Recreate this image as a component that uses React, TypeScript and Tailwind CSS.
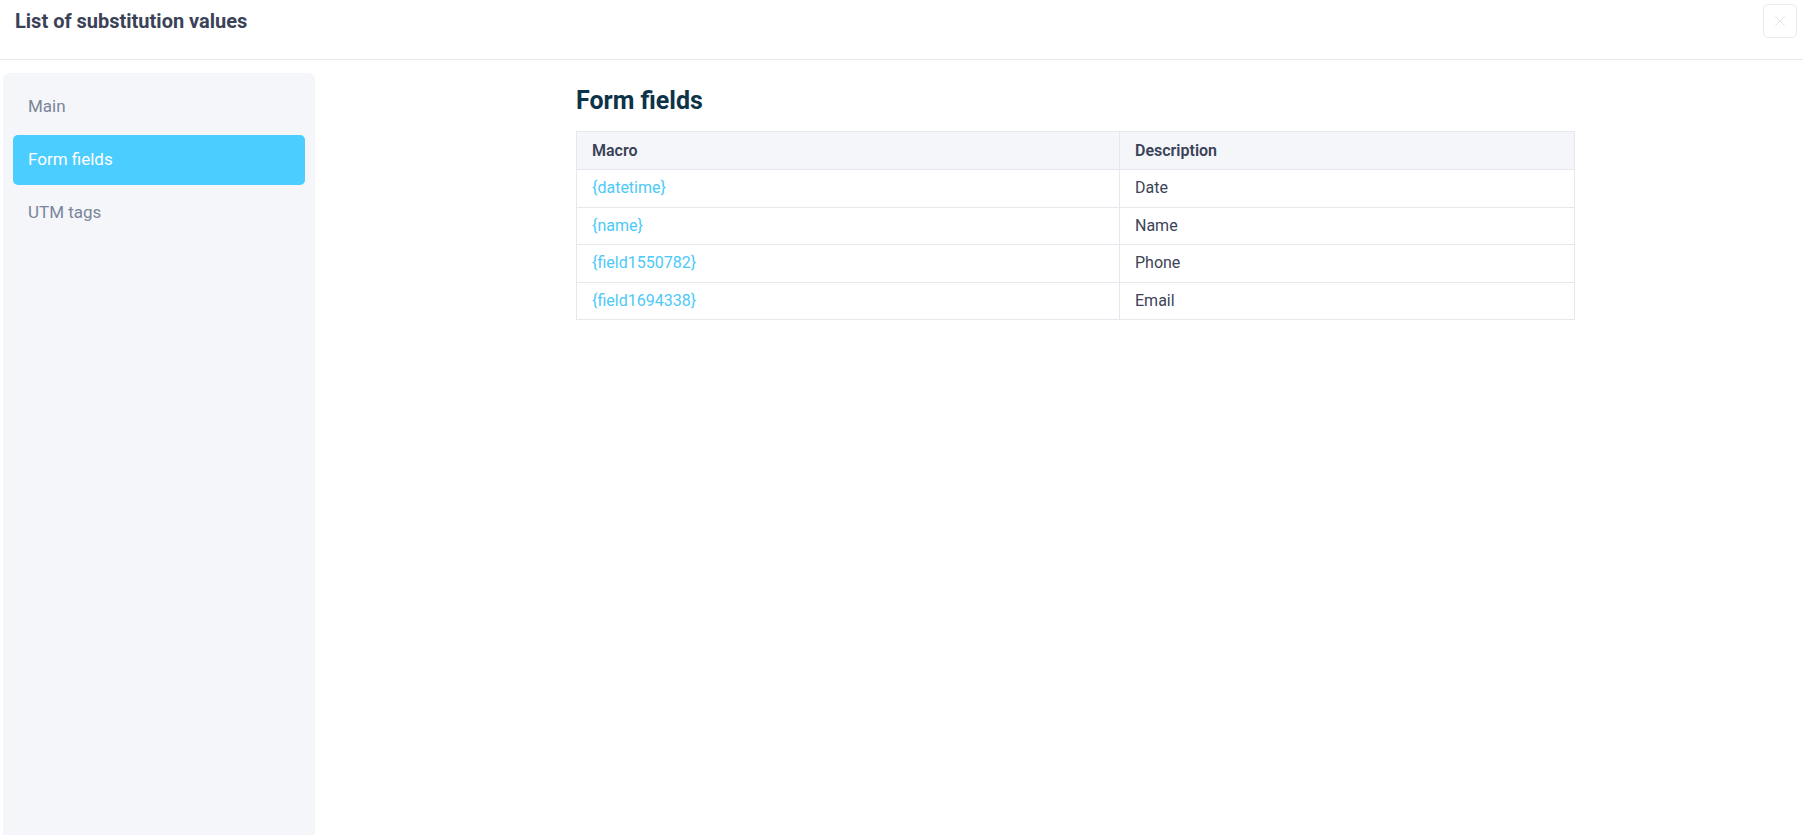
import { X } from "lucide-react";

const rows = [
  { macro: "{datetime}", description: "Date" },
  { macro: "{name}", description: "Name" },
  { macro: "{field1550782}", description: "Phone" },
  { macro: "{field1694338}", description: "Email" },
];

const tabs = ["Main", "Form fields", "UTM tags"];

export default function App() {
  const active = "Form fields";

  return (
    <div
      className="flex flex-col h-[835px] bg-white overflow-hidden"
      style={{ fontFamily: "Roboto, 'Liberation Sans', sans-serif" }}
    >
      {/* Dialog header */}
      <div className="flex items-start justify-between h-[60px] border-b border-[#e6e8ec] shrink-0">
        <div className="pl-[15px] pt-[9px] text-[20px] font-bold text-[#3a4257] leading-[24px]">
          List of substitution values
        </div>
        <button className="mt-[4px] mr-[6px] w-[34px] h-[34px] flex items-center justify-center rounded-[5px] border border-[#e8eaee] text-[#dfe2e7]">
          <X size={18} strokeWidth={1.2} />
        </button>
      </div>

      <div className="flex flex-1 min-h-0 pt-[13px]">
        {/* Section list */}
        <nav className="ml-[3px] w-[312px] shrink-0 bg-[#f5f6fa] rounded-t-[7px] px-[10px] pt-[9px] flex flex-col gap-[3px]">
          {tabs.map((t) =>
            t === active ? (
              <div
                key={t}
                className="h-[50px] flex items-center px-[15px] rounded-[5px] bg-[#4ccdff] text-white text-[17px]"
              >
                {t}
              </div>
            ) : (
              <div
                key={t}
                className="h-[50px] flex items-center px-[15px] text-[#7a8599] text-[17px]"
              >
                {t}
              </div>
            )
          )}
        </nav>

        {/* Content */}
        <main className="flex-1 pl-[33px]">
          <div className="mx-auto w-[999px]">
            <h2 className="mt-[12px] text-[25px] font-bold text-[#0d3348] leading-[32px]">
              Form fields
            </h2>
            <table className="mt-[14px] w-full border-collapse text-[16px]">
              <thead>
                <tr className="bg-[#f5f6fa]">
                  <th className="w-[543px] h-[38px] border border-[#e6e8ee] px-[15px] text-left font-semibold text-[#3a4257]">
                    Macro
                  </th>
                  <th className="h-[38px] border border-[#e6e8ee] px-[15px] text-left font-semibold text-[#3a4257]">
                    Description
                  </th>
                </tr>
              </thead>
              <tbody>
                {rows.map((r) => (
                  <tr key={r.macro}>
                    <td className="h-[37.5px] border border-[#e6e8ee] px-[15px] text-[#4cc9f8]">
                      {r.macro}
                    </td>
                    <td className="h-[37.5px] border border-[#e6e8ee] px-[15px] text-[#3c4356]">
                      {r.description}
                    </td>
                  </tr>
                ))}
              </tbody>
            </table>
          </div>
        </main>
      </div>
    </div>
  );
}
